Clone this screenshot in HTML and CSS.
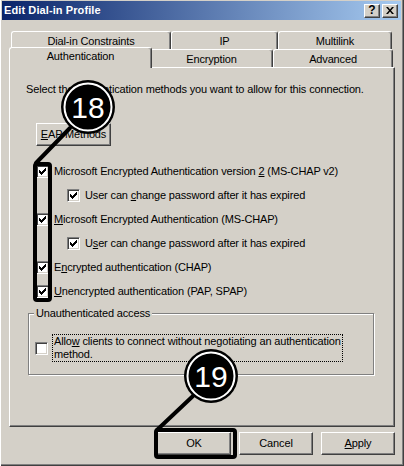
FILE: index.html
```html
<!DOCTYPE html>
<html lang="en">
<head>
  <meta charset="UTF-8" />
  <title>Edit Dial-in Profile</title>
  <link rel="stylesheet" href="styles.css">
</head>
<body>
  <svg class="defs" width="0" height="0">
    <symbol id="tick" viewBox="0 0 9 9">
      <path d="M1 3h1v3h-1z M2 4h1v3h-1z M3 5h1v3h-1z M4 4h1v3h-1z M5 3h1v3h-1z M6 2h1v3h-1z M7 1h1v3h-1z" fill="#000"/>
    </symbol>
  </svg>

  <div class="window">
    <div class="titlebar">
      <span class="title">Edit Dial-in Profile</span>
      <span class="cap-btn help">?</span>
      <span class="cap-btn close">
        <svg width="8" height="7" viewBox="0 0 8 7">
          <path d="M0 0h2l2 2.5L6 0h2L5 3.5 8 7H6L4 4.5 2 7H0l3-3.5z" fill="#000"/>
        </svg>
      </span>
    </div>

    <div class="tabs">
      <div class="tab-row">
        <div class="tab w-constraints">Dial-in Constraints</div>
        <div class="tab w-ip">IP</div>
        <div class="tab w-multilink">Multilink</div>
      </div>
      <div class="tab-row">
        <div class="tab active w-auth">Authentication</div>
        <div class="tab w-encryption">Encryption</div>
        <div class="tab w-advanced">Advanced</div>
      </div>
    </div>

    <div class="panel">
      <div class="intro">Select the authentication methods you want to allow for this connection.</div>
      <div class="btn eap"><u>E</u>AP Methods</div>

      <div class="checks">
        <div class="check">
          <span class="cb"><svg><use href="#tick"/></svg></span>
          <span>Microsoft Encrypted Authentication version <u>2</u> (MS-CHAP v2)</span>
        </div>
        <div class="check sub">
          <span class="cb"><svg><use href="#tick"/></svg></span>
          <span>User can <u>c</u>hange password after it has expired</span>
        </div>
        <div class="check">
          <span class="cb"><svg><use href="#tick"/></svg></span>
          <span><u>M</u>icrosoft Encrypted Authentication (MS-CHAP)</span>
        </div>
        <div class="check sub">
          <span class="cb"><svg><use href="#tick"/></svg></span>
          <span>U<u>s</u>er can change password after it has expired</span>
        </div>
        <div class="check">
          <span class="cb"><svg><use href="#tick"/></svg></span>
          <span>E<u>n</u>crypted authentication (CHAP)</span>
        </div>
        <div class="check">
          <span class="cb"><svg><use href="#tick"/></svg></span>
          <span><u>U</u>nencrypted authentication (PAP, SPAP)</span>
        </div>
      </div>

      <div class="group">
        <div class="legend">Unauthenticated access</div>
        <div class="group-row">
          <span class="cb"></span>
          <span class="focus">Allo<u>w</u> clients to connect without negotiating an authentication<br>method.</span>
        </div>
      </div>
    </div>

    <div class="buttons">
      <div class="btn">OK</div>
      <div class="btn">Cancel</div>
      <div class="btn"><u>A</u>pply</div>
    </div>

    <!-- numbered callouts drawn on top of the dialog -->
    <svg class="callouts" width="404" height="466" viewBox="0 0 404 466">
      <g fill="none" stroke="#000" stroke-width="4" stroke-linecap="round">
        <line x1="70" y1="128" x2="36" y2="163"/>
        <rect x="35" y="164" width="15" height="136" rx="2"/>
        <line x1="193" y1="396" x2="157" y2="430"/>
        <rect x="156" y="430" width="79" height="27" rx="2"/>
      </g>
      <g>
        <circle cx="88" cy="107" r="27" fill="#000"/>
        <circle cx="88" cy="107" r="23.5" fill="none" stroke="#fff" stroke-width="2"/>
        <text x="88" y="118" class="num">18</text>
        <circle cx="211" cy="376" r="27" fill="#000"/>
        <circle cx="211" cy="376" r="23.5" fill="none" stroke="#fff" stroke-width="2"/>
        <text x="211" y="387" class="num">19</text>
      </g>
    </svg>
  </div>
</body>
</html>
```

FILE: styles.css
```css
body {
  margin: 0;
  background: #d4d0c8;
  font-family: "Liberation Sans", Arial, sans-serif;
  font-size: 11px;
  line-height: 13px;
  letter-spacing: -0.15px;
  color: #000;
}

.defs {
  position: absolute;
}

.window {
  position: relative;
  width: 404px;
  height: 466px;
  box-sizing: border-box;
  overflow: hidden;
  background: #d4d0c8;
  box-shadow: inset 1px 0 #fff, inset -1px -1px #404040, inset -2px -2px #808080;
}

/* caption */
.titlebar {
  display: flex;
  align-items: center;
  gap: 2px;
  height: 19px;
  margin: 1px 3px 0 2px;
  padding: 0 3px 0 2px;
  background: linear-gradient(to right, #0a246a, #a6caf0);
}

.title {
  flex: 1;
  color: #fff;
  font-weight: bold;
  font-size: 11px;
  letter-spacing: 0.1px;
}

.cap-btn {
  display: flex;
  align-items: center;
  justify-content: center;
  width: 14px;
  height: 12px;
  border: 1px solid;
  border-color: #fff #404040 #404040 #fff;
  box-shadow: inset -1px -1px #808080;
  background: #d4d0c8;
  font-weight: bold;
  font-size: 12px;
  letter-spacing: 0;
}

/* tab strip */
.tabs {
  margin-top: 11px;
  padding-left: 11px;
}

.tab-row {
  display: flex;
  height: 18px;
}

.tab {
  box-sizing: border-box;
  height: 18px;
  border: 1px solid;
  border-color: #fff #404040 transparent #fff;
  border-bottom: none;
  border-radius: 3px 3px 0 0;
  box-shadow: inset -1px 0 #808080;
  background: #d4d0c8;
  text-align: center;
  line-height: 18px;
}

.tab.active {
  position: relative;
  z-index: 1;
  height: 21px;
  margin: -2px -2px 0;
  line-height: 17px;
}

.w-constraints { width: 160px; }
.w-ip { width: 107px; }
.w-multilink { width: 114px; }
.w-auth { width: 143px; }
.w-encryption { width: 123px; }
.w-advanced { width: 120px; }

/* page body */
.panel {
  box-sizing: border-box;
  width: 386px;
  height: 360px;
  margin-left: 9px;
  padding: 15px 0 0 16px;
  border: 1px solid;
  border-color: #fff #404040 #404040 #fff;
  box-shadow: inset -1px -1px #808080;
}

.btn {
  box-sizing: border-box;
  display: flex;
  align-items: center;
  justify-content: center;
  width: 74px;
  height: 23px;
  border: 1px solid;
  border-color: #fff #404040 #404040 #fff;
  box-shadow: inset -1px -1px #808080;
  background: #d4d0c8;
}

.btn.eap {
  width: 75px;
  margin: 27px 0 0 10px;
}

.checks {
  margin: 13px 0 0 10px;
}

.check {
  display: flex;
  align-items: center;
  gap: 5px;
  height: 24px;
}

.check.sub {
  padding-left: 31px;
}

.cb {
  box-sizing: border-box;
  flex: none;
  width: 13px;
  height: 13px;
  padding: 1px;
  border: 1px solid;
  border-color: #808080 #fff #fff #808080;
  box-shadow: inset 1px 1px #404040, inset -1px -1px #d4d0c8;
  background: #fff;
}

.cb svg {
  display: block;
  width: 9px;
  height: 9px;
}

/* unauthenticated access frame */
.group {
  width: 346px;
  box-sizing: border-box;
  margin: 10px 0 0 2px;
  border: 1px solid #808080;
  box-shadow: inset 1px 1px #fff, 1px 1px #fff;
}

.legend {
  display: table;
  margin: -7px 0 0 5px;
  padding: 0 2px;
  background: #d4d0c8;
}

.group-row {
  display: flex;
  align-items: center;
  gap: 4px;
  margin: 14px 0 12px 6px;
}

.focus {
  padding: 0 1px;
  border: 1px dotted #000;
}

.buttons {
  display: flex;
  justify-content: flex-end;
  gap: 8px;
  margin-top: 5px;
  padding-right: 9px;
}

.callouts {
  position: absolute;
  left: 0;
  top: 0;
  pointer-events: none;
}

.num {
  fill: #fff;
  font-family: "Liberation Sans", Arial, sans-serif;
  font-size: 30px;
  letter-spacing: 0;
  text-anchor: middle;
}
```
